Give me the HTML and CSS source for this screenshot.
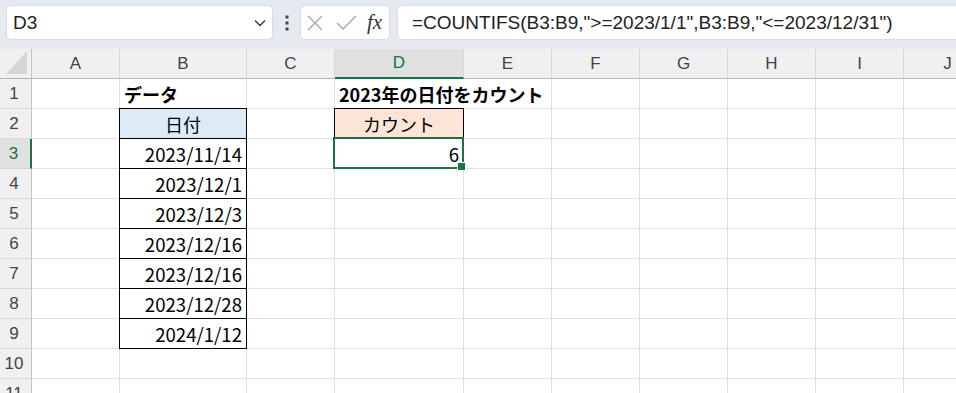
FILE: index.html
```html
<!DOCTYPE html>
<html lang="ja">
<head>
    <meta charset="UTF-8">
    <meta name="viewport" content="width=device-width, initial-scale=1.0">
    <title>COUNTIFS</title>
    <link rel="stylesheet" href="styles.css">
</head>
<body>
    <div class="formula-bar">
        <div class="name-box">
            <span>D3</span>
            <svg width="12" height="8" viewBox="0 0 12 8"><path d="M1 1.5 L6 6.5 L11 1.5" fill="none" stroke="#333" stroke-width="1.3"/></svg>
        </div>
        <div class="dots">
            <svg width="4" height="16" viewBox="0 0 4 16"><rect x="0.5" y="0.5" width="3" height="3" fill="#444"/><rect x="0.5" y="6.5" width="3" height="3" fill="#444"/><rect x="0.5" y="12.5" width="3" height="3" fill="#444"/></svg>
        </div>
        <div class="fx-box">
            <svg class="ic-x" width="16" height="16" viewBox="0 0 16 16"><path d="M1 1 L15 15 M15 1 L1 15" stroke="#a6a6a6" stroke-width="1.3" fill="none"/></svg>
            <svg class="ic-ok" width="21" height="15" viewBox="0 0 21 15"><path d="M1 8 L7 14 L20 1" stroke="#a6a6a6" stroke-width="1.3" fill="none"/></svg>
            <span class="fx">fx</span>
        </div>
        <div class="formula">=COUNTIFS(B3:B9,"&gt;=2023/1/1",B3:B9,"&lt;=2023/12/31")</div>
    </div>

    <div class="sheet">
        <div class="corner"><svg width="22" height="24" viewBox="0 0 22 24"><path d="M21 0 L21 23 L0 23 Z" fill="#d6d6d6"/></svg></div>
        <div class="ch">A</div><div class="ch">B</div><div class="ch">C</div><div class="ch on">D</div><div class="ch">E</div><div class="ch">F</div><div class="ch">G</div><div class="ch">H</div><div class="ch">I</div><div class="ch">J</div>

        <div class="rh">1</div><div class="c"></div><div class="c bold">データ</div><div class="c"></div><div class="c bold spill">2023年の日付をカウント</div><div class="c"></div><div class="c"></div><div class="c"></div><div class="c"></div><div class="c"></div><div class="c"></div>

        <div class="rh">2</div><div class="c"></div><div class="c bx top blue mid">日付</div><div class="c"></div><div class="c bx top peach mid">カウント</div><div class="c"></div><div class="c"></div><div class="c"></div><div class="c"></div><div class="c"></div><div class="c"></div>

        <div class="rh on">3</div><div class="c"></div><div class="c bx num">2023/11/14</div><div class="c"></div><div class="c num active">6</div><div class="c"></div><div class="c"></div><div class="c"></div><div class="c"></div><div class="c"></div><div class="c"></div>

        <div class="rh">4</div><div class="c"></div><div class="c bx num">2023/12/1</div><div class="c"></div><div class="c"></div><div class="c"></div><div class="c"></div><div class="c"></div><div class="c"></div><div class="c"></div><div class="c"></div>

        <div class="rh">5</div><div class="c"></div><div class="c bx num">2023/12/3</div><div class="c"></div><div class="c"></div><div class="c"></div><div class="c"></div><div class="c"></div><div class="c"></div><div class="c"></div><div class="c"></div>

        <div class="rh">6</div><div class="c"></div><div class="c bx num">2023/12/16</div><div class="c"></div><div class="c"></div><div class="c"></div><div class="c"></div><div class="c"></div><div class="c"></div><div class="c"></div><div class="c"></div>

        <div class="rh">7</div><div class="c"></div><div class="c bx num">2023/12/16</div><div class="c"></div><div class="c"></div><div class="c"></div><div class="c"></div><div class="c"></div><div class="c"></div><div class="c"></div><div class="c"></div>

        <div class="rh">8</div><div class="c"></div><div class="c bx num">2023/12/28</div><div class="c"></div><div class="c"></div><div class="c"></div><div class="c"></div><div class="c"></div><div class="c"></div><div class="c"></div><div class="c"></div>

        <div class="rh">9</div><div class="c"></div><div class="c bx num">2024/1/12</div><div class="c"></div><div class="c"></div><div class="c"></div><div class="c"></div><div class="c"></div><div class="c"></div><div class="c"></div><div class="c"></div>

        <div class="rh">10</div><div class="c"></div><div class="c"></div><div class="c"></div><div class="c"></div><div class="c"></div><div class="c"></div><div class="c"></div><div class="c"></div><div class="c"></div><div class="c"></div>

        <div class="rh">11</div><div class="c"></div><div class="c"></div><div class="c"></div><div class="c"></div><div class="c"></div><div class="c"></div><div class="c"></div><div class="c"></div><div class="c"></div><div class="c"></div>
    </div>
</body>
</html>
```

FILE: styles.css
```css
* { box-sizing: border-box; }
body { margin: 0; background: #fff; font-family: "Noto Sans CJK JP", sans-serif; overflow: hidden; }

/* formula bar */
.formula-bar { height: 49px; background: #e6e9ef; display: flex; align-items: flex-start; padding: 5px 0 0 6px; overflow: hidden; }
.name-box { width: 267px; height: 35px; background: #fff; border: 1px solid #d9dce3; border-radius: 5px; display: flex; align-items: center; justify-content: space-between; padding: 0 6px 0 6px; font-family: "Liberation Sans", sans-serif; font-size: 19px; color: #222; }
.dots { width: 27px; height: 35px; display: flex; align-items: center; justify-content: center; }
.fx-box { width: 90px; height: 35px; background: #fff; border: 1px solid #d9dce3; border-radius: 5px; display: flex; align-items: center; padding-left: 6px; }
.ic-ok { margin-left: 13px; }
.fx { margin-left: 10px; font-family: "Liberation Serif", serif; font-style: italic; font-size: 21px; color: #333; }
.formula { flex: 1; margin-left: 7px; margin-right: -10px; height: 35px; background: #fff; border: 1px solid #d9dce3; border-radius: 5px; padding-left: 14px; line-height: 33px; font-family: "Liberation Sans", sans-serif; font-size: 19px; color: #222; white-space: nowrap; }

/* sheet grid */
.sheet { display: grid; grid-template-columns: 32px 88px 127px 88px 129px 88px 88px 88px 88px 88px 88px; grid-template-rows: repeat(12, 30px); }
.corner { background: #f0f0f0; border-right: 1px solid #c4c4c4; border-bottom: 1px solid #b4b4b4; display: flex; align-items: flex-end; padding: 0 0 3px 6px; }
.ch { background: #f0f0f0; border-right: 1px solid #d6d6d6; border-bottom: 1px solid #b4b4b4; font-family: "Liberation Sans", sans-serif; font-size: 17px; color: #444; display: flex; align-items: center; justify-content: center; }
.ch.on { background: #e0e0e0; color: #1e7145; border-bottom: 2px solid #1e7145; }
.rh { background: #f0f0f0; border-right: 1px solid #c4c4c4; border-bottom: 1px solid #d6d6d6; font-family: "Liberation Sans", sans-serif; font-size: 17px; color: #444; display: flex; align-items: center; justify-content: center; padding-right: 3px; }
.rh.on { background: #e0e0e0; color: #1e7145; border-right: 2px solid #1e7145; }

.c { border-right: 1px solid #e0e0e0; border-bottom: 1px solid #e0e0e0; font-size: 18px; color: #000; display: flex; align-items: center; padding: 0 4px; white-space: nowrap; }
.bold { font-weight: bold; }
.spill { border-right-color: transparent; }
.mid { justify-content: center; }
.num { justify-content: flex-end; font-size: 18.6px; }
.blue { background: #ddebf7; }
.peach { background: #fce4d6; }
.bx { border-right-color: #000; border-bottom-color: #000; box-shadow: -1px 0 0 #000; }
.bx.top { box-shadow: -1px 0 0 #000, 0 -1px 0 #000, -1px -1px 0 #000; }

.active { position: relative; }
.active::after { content: ""; position: absolute; left: -2px; top: -2px; right: -1px; bottom: -1px; border: 2px solid #1e7145; }
.active::before { content: ""; position: absolute; right: -3px; bottom: -3px; width: 7px; height: 7px; background: #1e7145; border: 1px solid #fff; z-index: 1; }
```
